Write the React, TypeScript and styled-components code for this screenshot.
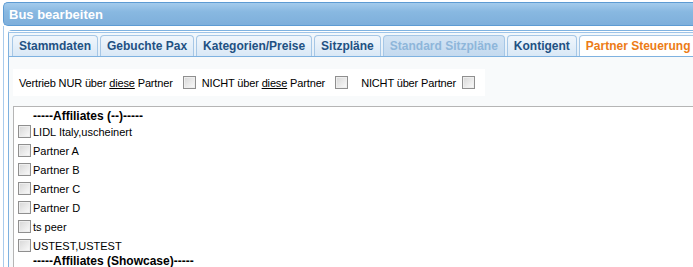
import styled, { createGlobalStyle } from "styled-components";

const GlobalStyle = createGlobalStyle`
  html, body {
    margin: 0;
    padding: 0;
    background: #ffffff;
    overflow: hidden;
  }
  body {
    font-family: "Liberation Sans", Tahoma, Arial, sans-serif;
  }
`;

type Tab = { label: string; state?: "active" | "disabled" };

const tabs: Tab[] = [
  { label: "Stammdaten" },
  { label: "Gebuchte Pax" },
  { label: "Kategorien/Preise" },
  { label: "Sitzpläne" },
  { label: "Standard Sitzpläne", state: "disabled" },
  { label: "Kontigent" },
  { label: "Partner Steuerung", state: "active" },
];

type Row = { label: string; group?: boolean };

const rows: Row[] = [
  { label: "-----Affiliates (--)-----", group: true },
  { label: "LIDL Italy,uscheinert" },
  { label: "Partner A" },
  { label: "Partner B" },
  { label: "Partner C" },
  { label: "Partner D" },
  { label: "ts peer" },
  { label: "USTEST,USTEST" },
  { label: "-----Affiliates (Showcase)-----", group: true },
];

export default function App() {
  return (
    <>
      <GlobalStyle />
      <Window>
        <TitleBar>Bus bearbeiten</TitleBar>
        <WindowBody>
          <Panel>
            <TabStrip>
              {tabs.map((t) => (
                <TabItem key={t.label} state={t.state}>
                  {t.label}
                </TabItem>
              ))}
            </TabStrip>
            <Content>
              <FilterRow>
                <FilterLabel>
                  Vertrieb NUR über <u>diese</u> Partner
                </FilterLabel>
                <Check space={10} />
                <FilterLabel space={6}>
                  NICHT über <u>diese</u> Partner
                </FilterLabel>
                <Check space={10} />
                <FilterLabel space={13}>NICHT über Partner</FilterLabel>
                <Check space={6} />
              </FilterRow>
              <ListBox>
                {rows.map((r) =>
                  r.group ? (
                    <GroupRow key={r.label}>{r.label}</GroupRow>
                  ) : (
                    <ItemRow key={r.label}>
                      <Check />
                      <ItemLabel>{r.label}</ItemLabel>
                    </ItemRow>
                  )
                )}
              </ListBox>
            </Content>
          </Panel>
        </WindowBody>
      </Window>
    </>
  );
}

const Window = styled.div`
  width: 100vw;
  height: 100vh;
  box-sizing: border-box;
  padding: 2px 0 0 3px;
  display: flex;
  flex-direction: column;
`;

const TitleBar = styled.div`
  height: 25px;
  box-sizing: border-box;
  padding: 5px 0 0 5px;
  border: 1px solid #5d9bd3;
  border-right: none;
  border-radius: 5px 0 0 5px;
  background: linear-gradient(#a3cbec, #88b8e1 40%, #7eafdb);
  color: #ffffff;
  font-weight: bold;
  font-size: 13px;
  line-height: 14px;
`;

const WindowBody = styled.div`
  flex: 1;
  display: flex;
  flex-direction: column;
  border-left: 1px solid #a9cbec;
  padding: 4px 0 0 4px;
`;

const Panel = styled.div`
  flex: 1;
  display: flex;
  flex-direction: column;
  border: 1px solid #7fb2e0;
  border-right: none;
  border-bottom: none;
  border-radius: 4px 0 0 0;
  background: #f8fafb;
`;

const TabStrip = styled.div`
  display: flex;
  gap: 2px;
  padding: 3px 0 0 3px;
  background: linear-gradient(#9ec4e8 0 1px, #f3f8fc 1px, #e3eef8);
  border-top: 1px solid #ffffff;
  border-bottom: 1px solid #7fb2e0;
`;

const TabItem = styled.div<{ state?: "active" | "disabled" }>`
  height: 21px;
  box-sizing: border-box;
  padding: 0 6px;
  border: 1px solid #a6c7e6;
  border-bottom: none;
  border-radius: 4px 4px 0 0;
  font-size: 12px;
  font-weight: bold;
  line-height: 20px;
  white-space: nowrap;
  background: ${(p) =>
    p.state === "active"
      ? "#ffffff"
      : p.state === "disabled"
      ? "linear-gradient(#d3e4f4, #c4daef)"
      : "linear-gradient(#f0f6fc, #d9e8f6)"};
  color: ${(p) =>
    p.state === "active"
      ? "#ec7b16"
      : p.state === "disabled"
      ? "#8eb6da"
      : "#1f5183"};
`;

const Content = styled.div`
  flex: 1;
  display: flex;
  flex-direction: column;
  padding: 12px 0 0 4px;
`;

const FilterRow = styled.div`
  align-self: flex-start;
  display: flex;
  align-items: center;
  padding: 7px 10px 7px 6px;
  background: #ffffff;
  font-size: 11px;
  letter-spacing: -0.15px;
  color: #000000;
`;

const FilterLabel = styled.span<{ space?: number }>`
  margin-left: ${(p) => p.space ?? 0}px;
  white-space: nowrap;
`;

const Check = styled.span<{ space?: number }>`
  display: inline-block;
  width: 13px;
  height: 13px;
  box-sizing: border-box;
  margin-left: ${(p) => p.space ?? 0}px;
  border: 1px solid #8f8f8f;
  background: linear-gradient(135deg, #d6d6d6, #fbfbfb);
  box-shadow: inset 0 0 0 1px #eeeeee;
  flex-shrink: 0;
`;

const ListBox = styled.div`
  flex: 1;
  margin-top: 10px;
  border-top: 1px solid #b5b5b5;
  border-left: 1px solid #b5b5b5;
  background: #ffffff;
  padding: 3px 0 0 4px;
  font-size: 11px;
  color: #000000;
`;

const GroupRow = styled.div`
  height: 12px;
  padding-left: 15px;
  font-size: 12px;
  font-weight: bold;
  line-height: 12px;
`;

const ItemRow = styled.div`
  display: flex;
  align-items: center;
  height: 19px;
`;

const ItemLabel = styled.span`
  margin-left: 2px;
`;
